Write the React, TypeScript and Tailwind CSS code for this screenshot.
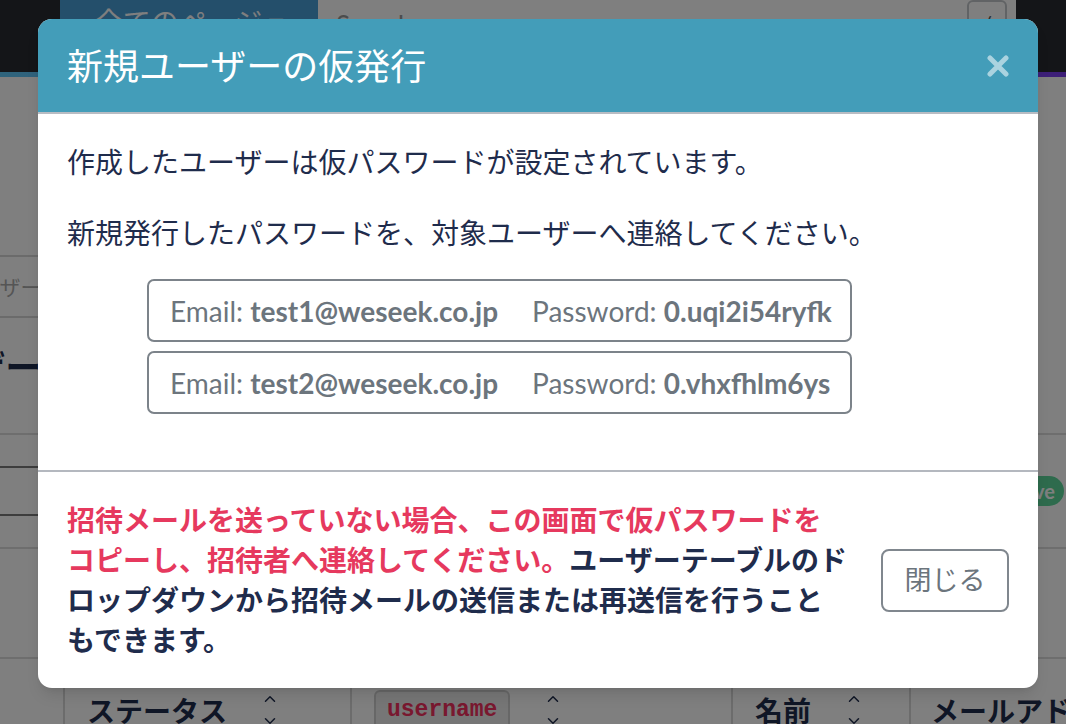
import { ChevronDown, ChevronUp } from "lucide-react";

const accounts = [
  { email: "test1@weseek.co.jp", password: "0.uqi2i54ryfk" },
  { email: "test2@weseek.co.jp", password: "0.vhxfhlm6ys" },
];

function SortArrows() {
  return (
    <div className="ml-[34px] flex flex-col text-[#1f2c4c]">
      <ChevronUp size={18} strokeWidth={2} />
      <ChevronDown size={18} strokeWidth={2} className="mt-[4px]" />
    </div>
  );
}

function Background() {
  return (
    <div className="h-[724px] w-[1066px] overflow-hidden bg-white">
      <header className="flex h-[72px] items-start bg-[#282a30]">
        <div className="ml-[60px] flex h-[56px] w-[258px] shrink-0 justify-center bg-[#489ed6] pt-[4px] text-[28px] leading-[36px] text-white">
          全てのページ ▾
        </div>
        <div className="flex h-[56px] w-[698px] shrink-0 items-start bg-white pl-[18px] pr-[9px]">
          <span className="pt-[6px] text-[26px] text-[#999]">Search</span>
          <span className="ml-auto flex h-[46px] w-[40px] items-center justify-center rounded-[6px] border-2 border-[#c2c6ca] text-[22px] text-[#555]">
            /
          </span>
        </div>
      </header>
      <div className="h-[5px] bg-gradient-to-r from-[#5ec8f8] to-[#7a3cf0]" />

      <div className="mt-[178px] -ml-[42px] flex h-[63px] w-[420px] items-center border-y-2 border-[#d6d6d6] text-[21px] text-[#aaa]">
        ユーザー名
      </div>
      <h2 className="mt-[27px] -ml-[102px] h-[45px] whitespace-nowrap text-[36px] font-bold leading-[45px] text-[#1f2c4c]">
        ユーザー一覧
      </h2>

      <div className="mt-[43px] border-t-2 border-[#dcdcdc]">
        <div className="flex h-[112px] items-center">
          <div className="-ml-[10px] h-[50px] w-[300px] border-y-2 border-[#7a7a7a]" />
          <span className="ml-auto mr-[2px] rounded-full bg-[#5cd69a] px-[9px] text-[20px] font-bold leading-[30px] text-white">
            active
          </span>
        </div>
        <div className="h-[112px] border-y-2 border-[#dcdcdc]" />
      </div>

      <div className="mt-[27px] flex h-[80px] text-[28px] font-bold text-[#1f2c4c]">
        <div className="w-[65px] shrink-0 border-r-2 border-[#d8d8d8]" />
        <div className="flex w-[287px] shrink-0 items-start border-r-2 border-[#d8d8d8] pl-[22px] pt-[4px]">
          <span>ステータス</span>
          <SortArrows />
        </div>
        <div className="flex w-[381px] shrink-0 items-start border-r-2 border-[#d8d8d8] pl-[22px] pt-[4px]">
          <span className="rounded-[6px] border-2 border-[#cfcfcf] bg-[#ececec] px-[11px] font-['Liberation_Mono',monospace] text-[23px] font-bold leading-[36px] text-[#f2305e]">
            username
          </span>
          <SortArrows />
        </div>
        <div className="flex w-[178px] shrink-0 items-start border-r-2 border-[#d8d8d8] pl-[22px] pt-[4px]">
          <span>名前</span>
          <SortArrows />
        </div>
        <div className="flex shrink-0 items-start pl-[20px] pt-[4px]">
          <span className="whitespace-nowrap">メールアドレス</span>
        </div>
      </div>
    </div>
  );
}

export default function App() {
  return (
    <div className="relative h-[724px] w-[1066px] overflow-hidden font-['Lato','Noto_Sans_CJK_JP',sans-serif]">
      <Background />

      <div className="absolute inset-0 bg-black/50">
        <div className="ml-[38px] mt-[19px] w-[1000px] overflow-hidden rounded-[14px] bg-white shadow-lg">
          <div className="flex h-[95px] items-center border-b-2 border-[#b8bcc3] bg-[#439db9] px-[29px]">
            <h1 className="text-[36px] leading-none text-white">新規ユーザーの仮発行</h1>
            <button className="ml-auto text-white/55">
              <svg width="22" height="22" viewBox="0 0 22 22">
                <path
                  d="M3 3 L19 19 M19 3 L3 19"
                  stroke="currentColor"
                  strokeWidth="5"
                  strokeLinecap="round"
                />
              </svg>
            </button>
          </div>

          <div className="border-b-2 border-[#b4b8bf] px-[29px] pb-[56px] pt-[28px] text-[28px] leading-[40px] text-[#1f2c4c]">
            <p>作成したユーザーは仮パスワードが設定されています。</p>
            <p className="mt-[31px]">新規発行したパスワードを、対象ユーザーへ連絡してください。</p>
            <div className="ml-[80px] mt-[26px] flex w-[705px] flex-col gap-[9px]">
              {accounts.map((a) => (
                <div
                  key={a.email}
                  className="flex h-[63px] items-center gap-[34px] rounded-[7px] border-2 border-[#7c838a] pl-[21px] text-[28px] text-[#6c757d]"
                >
                  <span>
                    Email: <b>{a.email}</b>
                  </span>
                  <span>
                    Password: <b>{a.password}</b>
                  </span>
                </div>
              ))}
            </div>
          </div>

          <div className="flex items-center px-[29px] py-[28px]">
            <p className="whitespace-nowrap text-[28px] font-bold leading-[40px] text-[#1f2c4c]">
              <span className="text-[#e6395e]">
                招待メールを送っていない場合、この画面で仮パスワードを
                <br />
                コピーし、招待者へ連絡してください。
              </span>
              ユーザーテーブルのド
              <br />
              ロップダウンから招待メールの送信または再送信を行うこと
              <br />
              もできます。
            </p>
            <button className="ml-auto flex h-[63px] w-[128px] items-center justify-center rounded-[8px] border-2 border-[#80878e] text-[27px] text-[#6c757d]">
              閉じる
            </button>
          </div>
        </div>
      </div>
    </div>
  );
}
